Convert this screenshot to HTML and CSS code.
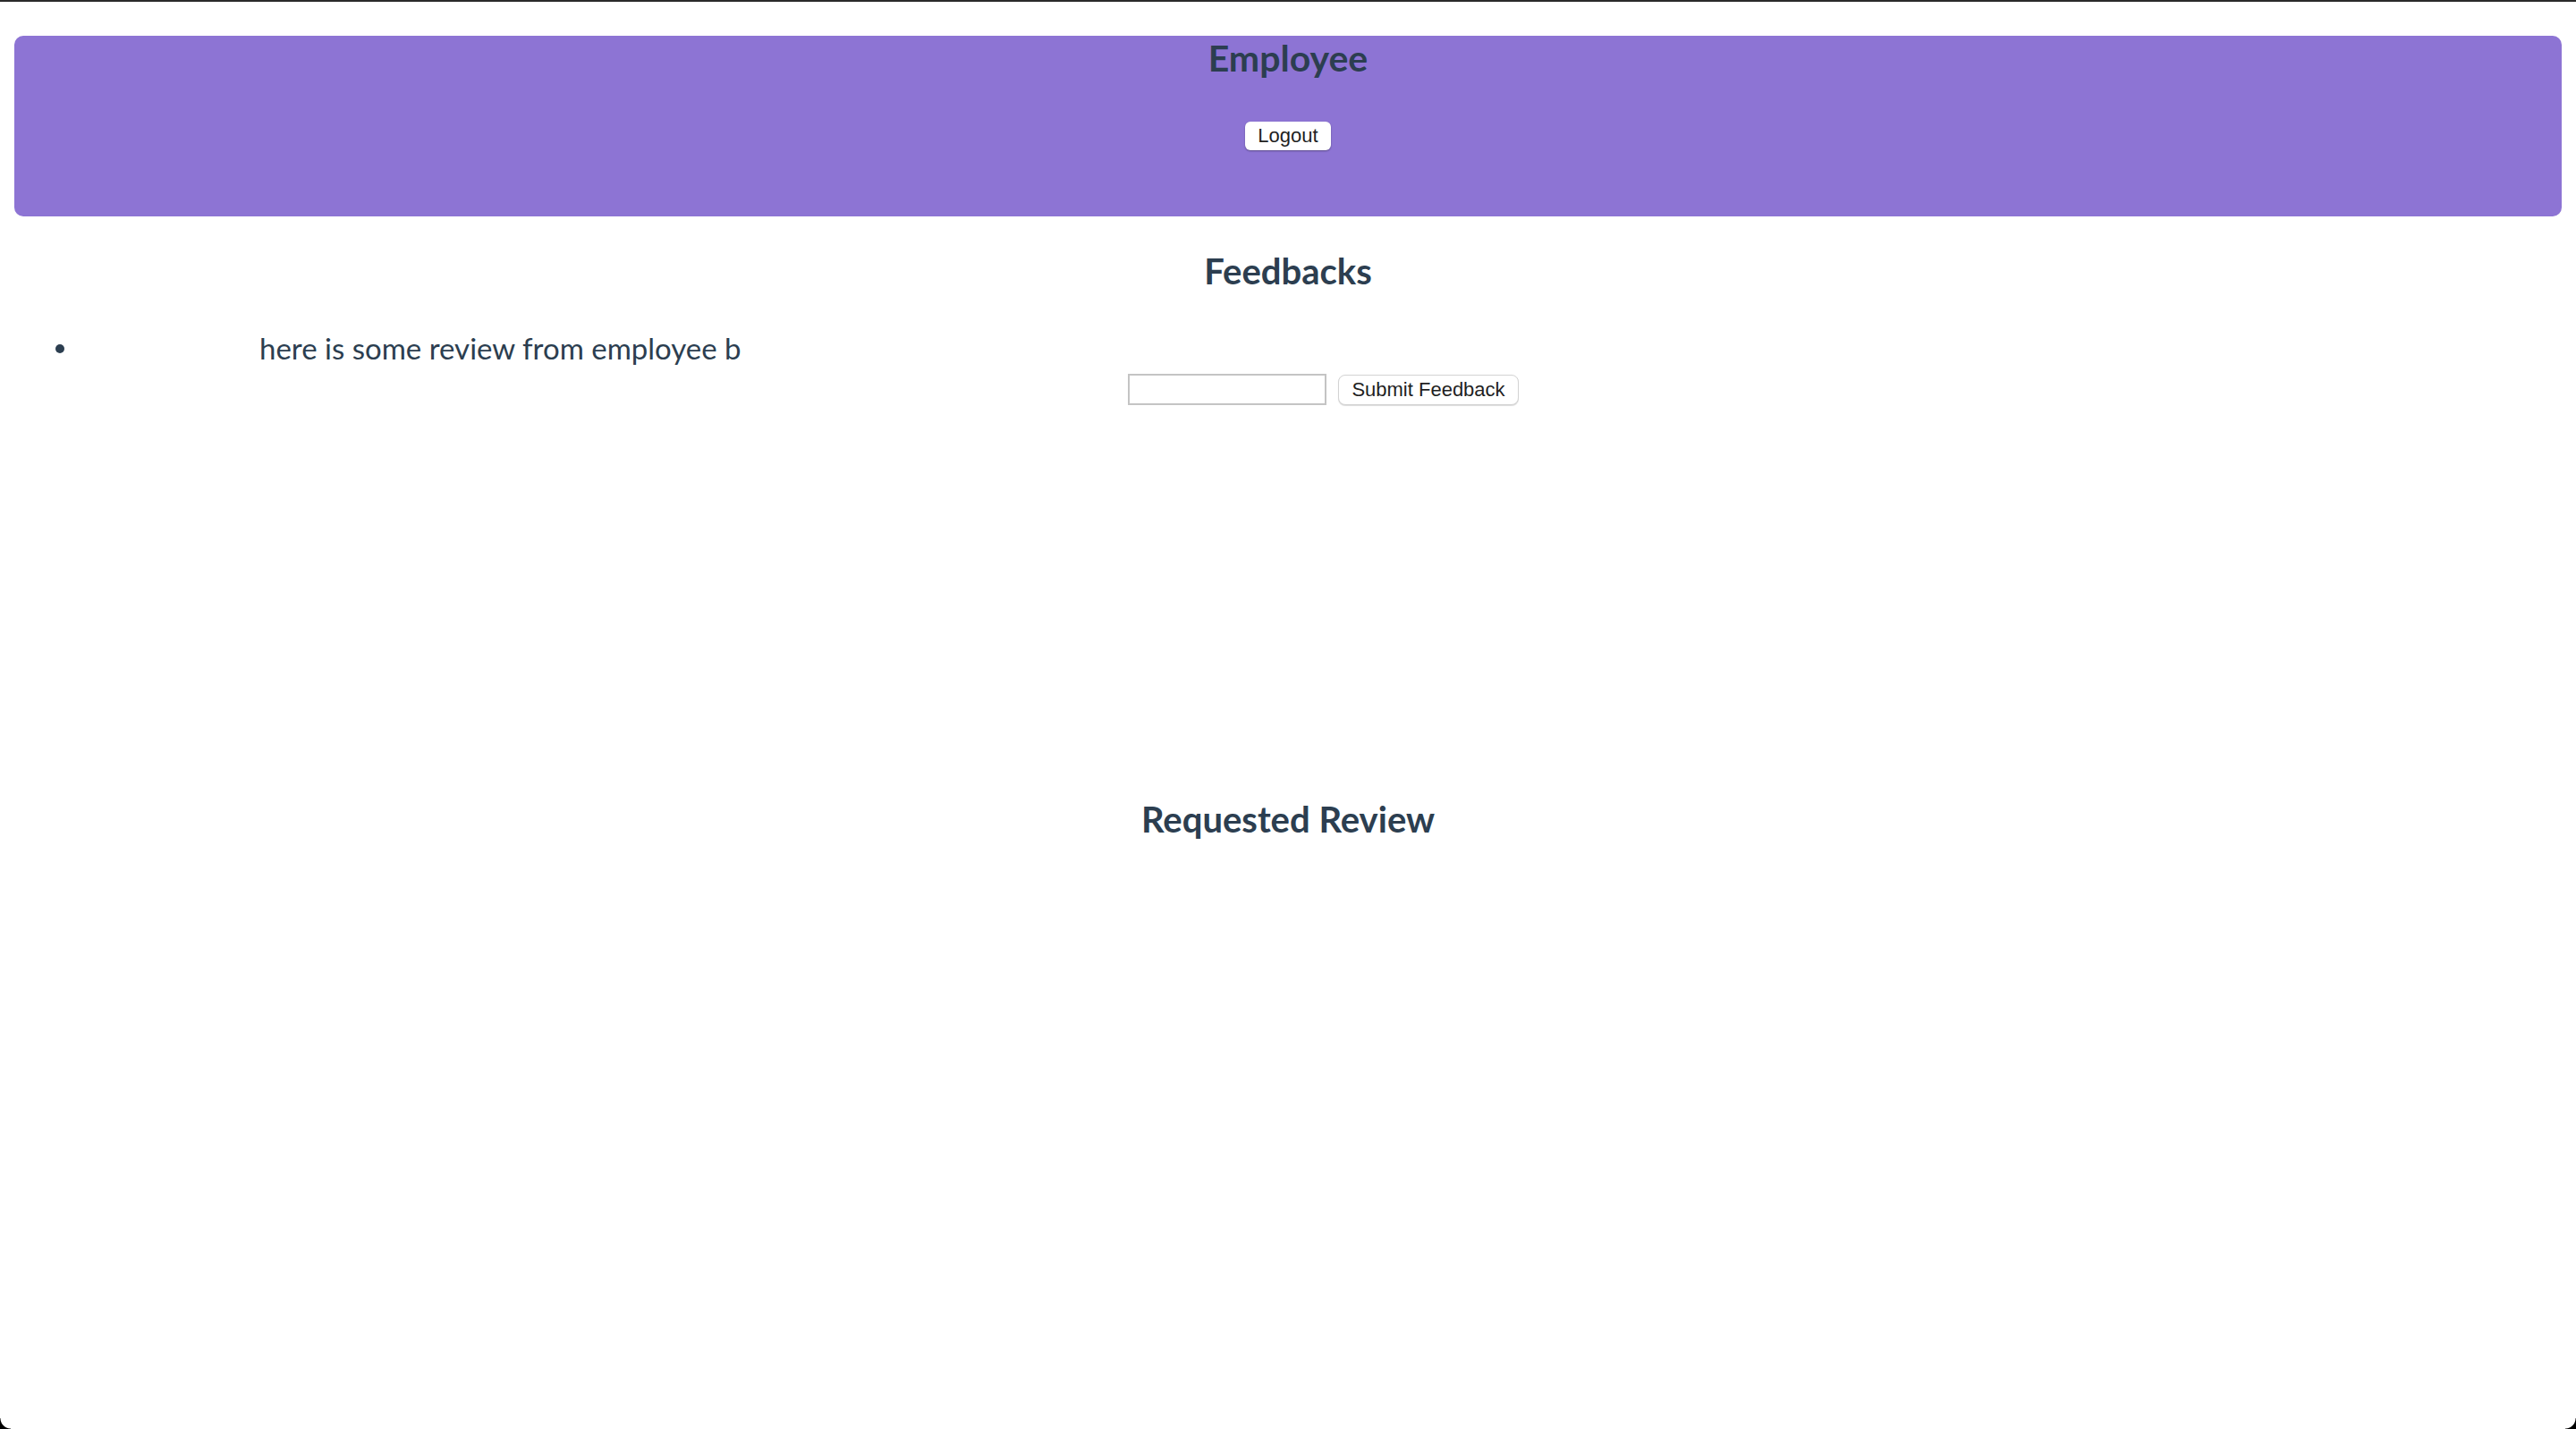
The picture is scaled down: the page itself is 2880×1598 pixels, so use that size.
FILE: index.html
```html
<!DOCTYPE html>
<html lang="en">
<head>
<meta charset="utf-8">
<title>Employee</title>
<link rel="stylesheet" href="styles.css">
</head>
<body>
<div class="app">
  <header class="banner">
    <h1 class="banner-title">Employee</h1>
    <button class="btn-logout" type="button">Logout</button>
  </header>

  <section class="feedbacks">
    <h2 class="section-title">Feedbacks</h2>
    <ul class="feedback-list">
      <li class="feedback-item"><span class="dot"></span><span class="feedback-text">here is some review from employee b</span></li>
    </ul>
    <form class="feedback-form" onsubmit="return false">
      <input class="feedback-input" type="text">
      <button class="btn-submit" type="submit">Submit Feedback</button>
    </form>
  </section>

  <section class="requested">
    <h2 class="section-title">Requested Review</h2>
  </section>
</div>
</body>
</html>
```

FILE: styles.css
```css
html, body {
  margin: 0;
  padding: 0;
  background: #ffffff;
}

body {
  border-top: 2px solid #2a2a2a;
  min-height: 1596px;
  box-sizing: border-box;
}

body::after {
  content: "";
  position: fixed;
  left: 0;
  right: 0;
  bottom: 0;
  height: 12px;
  pointer-events: none;
  background:
    radial-gradient(circle at 12px 0, transparent 11px, #000 12px) left bottom / 12px 12px no-repeat,
    radial-gradient(circle at 0 0, transparent 11px, #000 12px) right bottom / 12px 12px no-repeat;
}

.app {
  font-family: Lato, "Open Sans", Arial, sans-serif;
  color: #2c3e50;
  text-align: center;
  padding: 38px 16px 0;
}

.banner {
  background: #8d74d4;
  border-radius: 10px;
  height: 202px;
  display: flex;
  flex-direction: column;
  align-items: center;
}

.banner-title {
  margin: 0;
  font-size: 41px;
  line-height: 49px;
  font-weight: 700;
}

.btn-logout {
  margin-top: 47px;
  width: 96px;
  height: 32px;
  padding: 0;
  border: none;
  border-radius: 6px;
  background: #ffffff;
  box-shadow: 0 1px 2px rgba(0, 0, 0, 0.35);
  font-family: "Liberation Sans", Arial, sans-serif;
  font-size: 22px;
  color: #1f1f1f;
}

.section-title {
  margin: 0;
  font-size: 40px;
  line-height: 47px;
  font-weight: 700;
}

.feedbacks .section-title {
  margin-top: 38px;
}

.feedback-list {
  list-style: none;
  margin: 43px 0 0;
  padding: 0 0 0 46px;
}

.feedback-item {
  display: flex;
  align-items: center;
  height: 38px;
  text-align: left;
}

.dot {
  width: 10px;
  height: 10px;
  border-radius: 50%;
  background: #2c3e50;
  flex: none;
  margin-top: 2px;
}

.feedback-text {
  margin-left: 218px;
  font-size: 33px;
  font-weight: 400;
  line-height: 38px;
}

.feedback-form {
  margin: 10px 0 0;
  padding-left: 79px;
  display: flex;
  justify-content: center;
  align-items: center;
  gap: 13px;
}

.feedback-input {
  width: 222px;
  height: 35px;
  box-sizing: border-box;
  border: 2px solid #c4c4c4;
  margin: 0;
  padding: 0 4px;
  background: #fff;
}

.btn-submit {
  width: 202px;
  height: 34px;
  box-sizing: border-box;
  margin: 0;
  padding: 0;
  border: 1px solid #d3d3d3;
  border-radius: 8px;
  background: #ffffff;
  box-shadow: 0 1px 1px rgba(0, 0, 0, 0.15);
  font-family: "Liberation Sans", Arial, sans-serif;
  font-size: 22px;
  color: #1f1f1f;
}

.requested .section-title {
  font-size: 40px;
  line-height: 48px;
  margin-top: 439px;
}
```
